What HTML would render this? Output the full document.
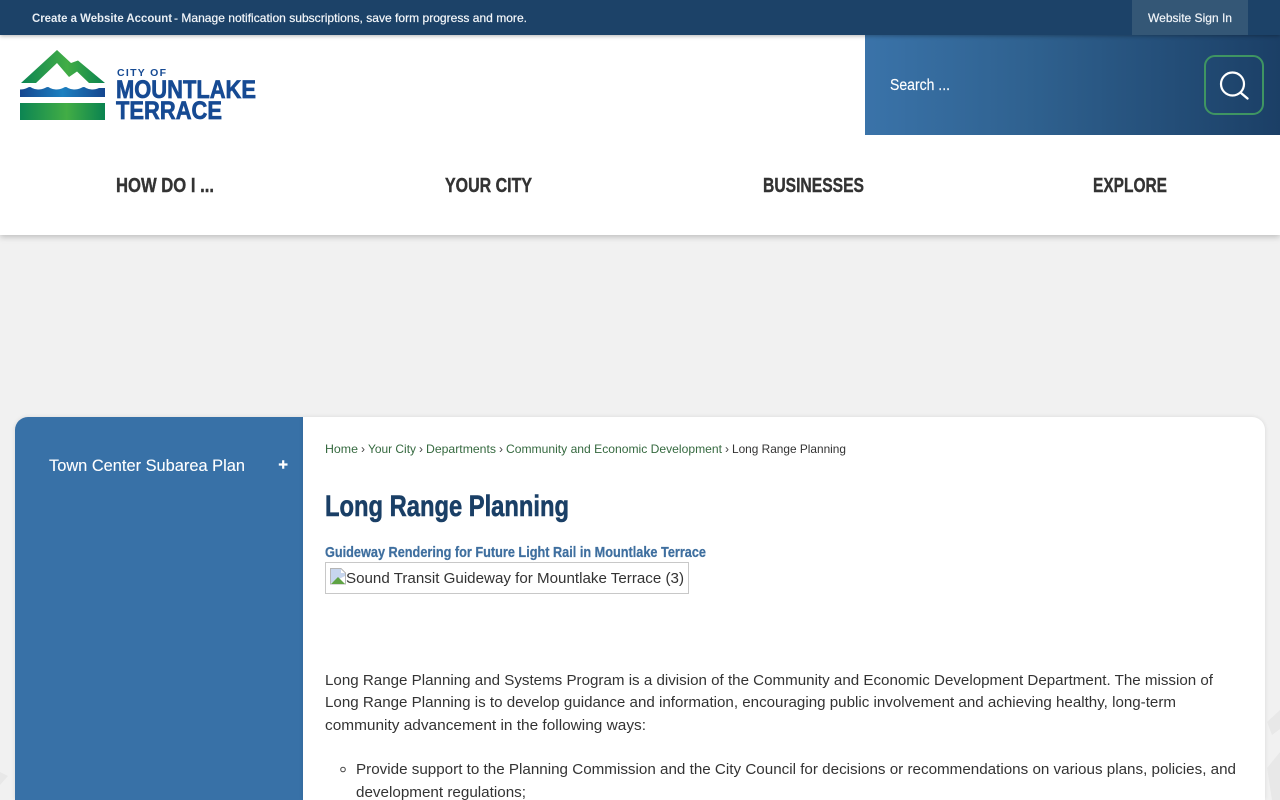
<!DOCTYPE html>
<html lang="en">
<head>
<meta charset="utf-8">
<title>Long Range Planning</title>
<style>
html,body{margin:0;padding:0;width:1280px;height:800px;overflow:hidden;background:#f1f1f1}
body{position:relative;font-family:"Liberation Sans",sans-serif}
.abs{position:absolute}
#top{left:0;top:0;width:1280px;height:35px;background:#1c4268;box-shadow:0 1px 4px rgba(0,0,0,.3);z-index:3}
#signin{left:1132px;top:0;width:116px;height:35px;background:#345776;z-index:4}
#header{left:0;top:35px;width:1280px;height:200px;background:#fff;box-shadow:0 2px 6px rgba(0,0,0,.22);z-index:1}
#search{left:865px;top:35px;width:415px;height:100px;background:linear-gradient(90deg,#3a73a9 0%,#2f618f 40%,#1b3f66 100%);z-index:2}
#sbtn{left:1204px;top:55px;width:56px;height:56px;border:2px solid #3f9562;border-radius:11px;z-index:2}
#side{left:15px;top:417px;width:288px;height:383px;background:#3871a7;border-top-left-radius:13px;box-shadow:0 0 4px rgba(0,0,0,.1);z-index:1}
#main{left:303px;top:417px;width:962px;height:383px;background:#fff;border-top-right-radius:13px;box-shadow:0 0 4px rgba(0,0,0,.1);z-index:1}
#imgbox{left:325px;top:562px;width:362px;height:30px;border:1px solid #c8c8c8;z-index:2}
svg{position:absolute;left:0;top:0;z-index:5}
text{font-family:"Liberation Sans",sans-serif}
.b{font-weight:bold}
</style>
</head>
<body>
<div class="abs" id="top"></div>
<div class="abs" id="signin"></div>
<div class="abs" id="header"></div>
<div class="abs" id="search"></div>
<div class="abs" id="sbtn"></div>
<div class="abs" id="side"></div>
<div class="abs" id="main"></div>
<div class="abs" id="imgbox"></div>

<svg width="1280" height="800" viewBox="0 0 1280 800">
<defs>
<linearGradient id="g1" x1="0" x2="1" y1="0" y2="0">
<stop offset="0" stop-color="#0c8553"/><stop offset=".55" stop-color="#42ad45"/><stop offset="1" stop-color="#0a8350"/>
</linearGradient>
<linearGradient id="g2" x1="0" x2="1" y1="0" y2="0">
<stop offset="0" stop-color="#15468f"/><stop offset=".5" stop-color="#1c80c0"/><stop offset="1" stop-color="#15468f"/>
</linearGradient>
</defs>

<!-- watermarks -->
<path d="M1280 710 L1267 722 L1272 735 L1280 729 Z M1280 752 L1267 768 L1272 800 L1280 800 Z" fill="#e8e8e8"/>
<path d="M0 772 L8 776 L0 785 Z" fill="#e8e8e8"/>

<!-- top bar -->
<text x="32" y="22" font-size="12" class="b" fill="#e8eef4" textLength="140" lengthAdjust="spacingAndGlyphs">Create a Website Account</text>
<text x="174" y="22" font-size="12" fill="#f4f7fa" stroke="#f4f7fa" stroke-width=".2" textLength="353" lengthAdjust="spacingAndGlyphs">- Manage notification subscriptions, save form progress and more.</text>
<text x="1148" y="22" font-size="12" fill="#f0f4f8" stroke="#f0f4f8" stroke-width=".2" textLength="84" lengthAdjust="spacingAndGlyphs">Website Sign In</text>

<!-- logo -->
<path d="M21 83 L57 50 L71 63 L78 60.500 L105 83 L89 83 L77 71.500 L69 77 L57 63 L36 83 Z" fill="url(#g1)"/>
<path d="M20 89.500 q4 0 7-1.500 q3-2 5 0 q3 1.500 6 1.500 q4 0 7-1.500 q3-2 5 0 q3 1.500 6 1.500 q4 0 7-1.500 q3-2 5 0 q3 1.500 6 1.500 q4 0 7-1.500 q3-2 5 0 q3 1.500 6 1.500 q4 0 7-1.500 L105 88 L105 97 L20 97 Z" fill="url(#g2)"/>
<rect x="20" y="103" width="85" height="17" fill="url(#g1)"/>
<text x="117" y="76" font-size="10.500" class="b" fill="#164a93" textLength="49" lengthAdjust="spacing">CITY OF</text>
<text x="116" y="98" font-size="25" class="b" fill="#164a93" stroke="#164a93" stroke-width=".7" textLength="140" lengthAdjust="spacingAndGlyphs">MOUNTLAKE</text>
<text x="116" y="119" font-size="25" class="b" fill="#164a93" stroke="#164a93" stroke-width=".7" textLength="106" lengthAdjust="spacingAndGlyphs">TERRACE</text>

<!-- search -->
<text x="890" y="90" font-size="16" fill="#fff" stroke="#fff" stroke-width=".15" textLength="60" lengthAdjust="spacingAndGlyphs">Search ...</text>
<circle cx="1232.500" cy="84" r="11.500" fill="none" stroke="#fff" stroke-width="2.200"/>
<path d="M1241 93 L1247.500 98.500" fill="none" stroke="#fff" stroke-width="2.400" stroke-linecap="round"/>

<!-- nav -->
<g font-size="20" class="b" fill="#333" stroke="#333" stroke-width=".4">
<text x="116" y="192" textLength="98" lengthAdjust="spacingAndGlyphs">HOW DO I ...</text>
<text x="445" y="192" textLength="87" lengthAdjust="spacingAndGlyphs">YOUR CITY</text>
<text x="763" y="192" textLength="101" lengthAdjust="spacingAndGlyphs">BUSINESSES</text>
<text x="1093" y="192" textLength="74" lengthAdjust="spacingAndGlyphs">EXPLORE</text>
</g>

<!-- sidebar -->
<text x="49" y="471" font-size="16.500" fill="#fff" stroke="#fff" stroke-width=".1" textLength="196" lengthAdjust="spacingAndGlyphs">Town Center Subarea Plan</text>
<path d="M278.800 464.500 H287.500 M283.200 460.300 V468.700" stroke="#fff" stroke-width="2.200"/>

<!-- breadcrumb -->
<g font-size="12" fill="#35693f">
<text x="325" y="453" textLength="33" lengthAdjust="spacingAndGlyphs">Home</text>
<text x="361" y="453" fill="#444">›</text>
<text x="368" y="453" textLength="48" lengthAdjust="spacingAndGlyphs">Your City</text>
<text x="419" y="453" fill="#444">›</text>
<text x="426" y="453" textLength="70" lengthAdjust="spacingAndGlyphs">Departments</text>
<text x="499" y="453" fill="#444">›</text>
<text x="506" y="453" textLength="216" lengthAdjust="spacingAndGlyphs">Community and Economic Development</text>
<text x="725" y="453" fill="#444">›</text>
<text x="732" y="453" fill="#333" textLength="114" lengthAdjust="spacingAndGlyphs">Long Range Planning</text>
</g>

<!-- headings -->
<text x="325" y="516" font-size="30" class="b" fill="#1a3f66" stroke="#1a3f66" stroke-width=".6" textLength="244" lengthAdjust="spacingAndGlyphs">Long Range Planning</text>
<text x="325" y="557" font-size="15" class="b" fill="#3f6f9f" stroke="#3f6f9f" stroke-width=".25" textLength="381" lengthAdjust="spacingAndGlyphs">Guideway Rendering for Future Light Rail in Mountlake Terrace</text>

<!-- broken image -->
<path d="M330.500 568.500 H341 L345.500 573 V584 H330.500 Z" fill="#fff" stroke="#b5b5b5" stroke-width="1"/>
<path d="M331 569 H341 V573 H345 V576 L337 580 L331 583 Z" fill="#c7d6ee"/>
<path d="M331 584 L338 577 L345 584 Z" fill="#5fa344"/>
<text x="346" y="583" font-size="15" fill="#333" textLength="338" lengthAdjust="spacingAndGlyphs">Sound Transit Guideway for Mountlake Terrace (3)</text>

<!-- body text -->
<g font-size="15" fill="#333">
<text x="325" y="685" textLength="888" lengthAdjust="spacingAndGlyphs">Long Range Planning and Systems Program is a division of the Community and Economic Development Department. The mission of</text>
<text x="325" y="707" textLength="851" lengthAdjust="spacingAndGlyphs">Long Range Planning is to develop guidance and information, encouraging public involvement and achieving healthy, long-term</text>
<text x="325" y="730" textLength="321" lengthAdjust="spacingAndGlyphs">community advancement in the following ways:</text>
<circle cx="343" cy="769.500" r="2.300" fill="none" stroke="#444" stroke-width="1"/>
<text x="356" y="774" textLength="880" lengthAdjust="spacingAndGlyphs">Provide support to the Planning Commission and the City Council for decisions or recommendations on various plans, policies, and</text>
<text x="356" y="797" textLength="170" lengthAdjust="spacingAndGlyphs">development regulations;</text>
</g>
</svg>
</body>
</html>
